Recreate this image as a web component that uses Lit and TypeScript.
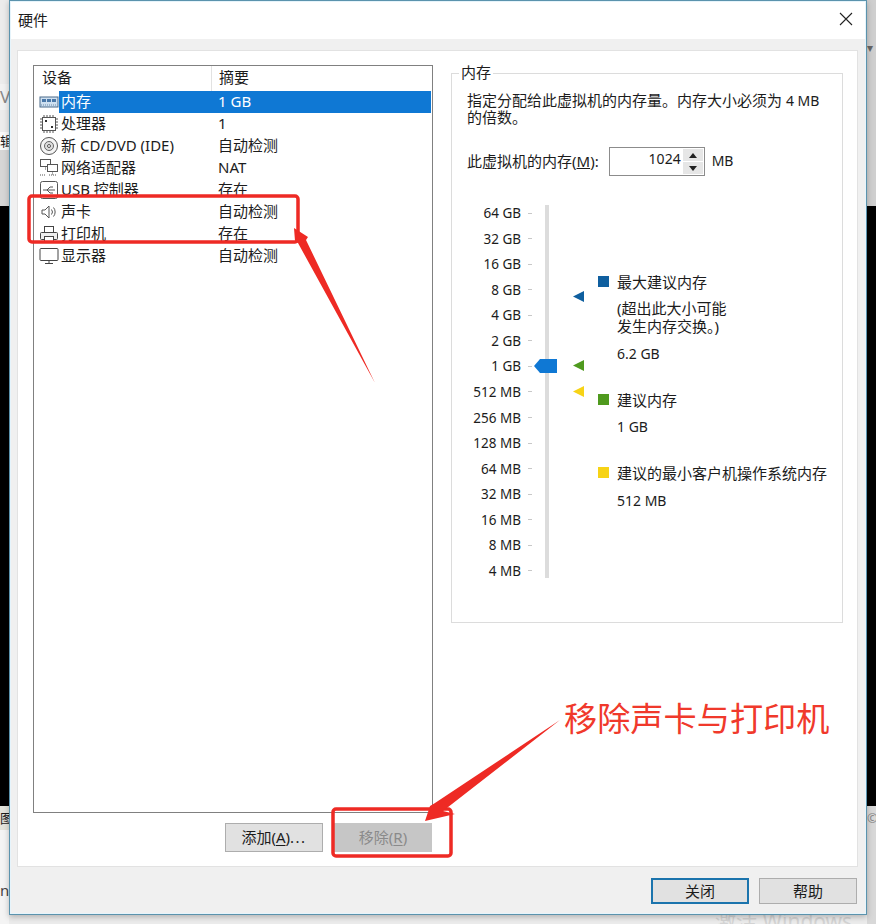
import { LitElement, html, css, svg } from "lit";
import { customElement } from "lit/decorators.js";

const icons: Record<string, unknown> = {
  mem: svg`<rect x="1" y="5" width="18" height="10" fill="#cfe0f0" stroke="#4a6a8a"/><rect x="3" y="7" width="4" height="3" fill="#4a78a8"/><rect x="8" y="7" width="4" height="3" fill="#4a78a8"/><rect x="13" y="7" width="4" height="3" fill="#4a78a8"/><path d="M2 13h16" stroke="#6a8aa8" stroke-dasharray="1 1"/>`,
  cpu: svg`<rect x="3.500" y="3.500" width="13" height="13" fill="#fff" stroke="#555"/><path d="M1 5h2M1 8h2M1 11h2M1 14h2M17 5h2M17 8h2M17 11h2M17 14h2M5 1v2M8 1v2M11 1v2M14 1v2M5 17v2M8 17v2M11 17v2M14 17v2" stroke="#555"/><rect x="6" y="6" width="2" height="2" fill="#333"/><rect x="12" y="12" width="2" height="2" fill="#333"/>`,
  cd: svg`<circle cx="10" cy="10" r="8.500" fill="#f4f4f4" stroke="#555"/><circle cx="10" cy="10" r="4.500" fill="#ddd" stroke="#666"/><circle cx="10" cy="10" r="1.500" fill="#fff" stroke="#555"/>`,
  net: svg`<rect x="1.500" y="1.500" width="10" height="7" fill="#fff" stroke="#555"/><rect x="8.500" y="6.500" width="10" height="7" fill="#fff" stroke="#555"/><path d="M13.500 13.500v3M10 17h7M6.500 8.500v4M1 17h6" stroke="#555" stroke-dasharray="1 1"/>`,
  usb: svg`<rect x="1.500" y="1.500" width="17" height="17" rx="2" fill="#fff" stroke="#555"/><path d="M4 10h12M8 10l3-3h3M8 10l3 3h3" fill="none" stroke="#555"/>`,
  sound: svg`<path d="M3 8h3l4-4v12l-4-4H3z" fill="#fff" stroke="#555"/><path d="M12.500 7.500a4 4 0 0 1 0 5M14.500 5.500a7 7 0 0 1 0 9" fill="none" stroke="#555"/>`,
  printer: svg`<rect x="5.500" y="2.500" width="9" height="6" fill="#fff" stroke="#444"/><rect x="1.500" y="8.500" width="17" height="7" rx="1" fill="#eee" stroke="#444"/><rect x="5.500" y="12.500" width="9" height="5" fill="#fff" stroke="#444"/>`,
  display: svg`<rect x="1" y="2.500" width="18" height="12" rx="1" fill="#fff" stroke="#444"/><path d="M6 17.500h8M10 14.500v3" stroke="#444"/>`,
};

const devices = [
  ["mem", "内存", "1 GB"],
  ["cpu", "处理器", "1"],
  ["cd", "新 CD/DVD (IDE)", "自动检测"],
  ["net", "网络适配器", "NAT"],
  ["usb", "USB 控制器", "存在"],
  ["sound", "声卡", "自动检测"],
  ["printer", "打印机", "存在"],
  ["display", "显示器", "自动检测"],
];

const scale = ["64 GB", "32 GB", "16 GB", "8 GB", "4 GB", "2 GB", "1 GB", "512 MB", "256 MB", "128 MB", "64 MB", "32 MB", "16 MB", "8 MB", "4 MB"];

@customElement("app-root")
export class AppRoot extends LitElement {
  static styles = css`
    :host {
      display: block;
      position: relative;
      width: 876px;
      height: 924px;
      overflow: hidden;
      background: #ececec;
      font-family: "Noto Sans", "Noto Sans CJK SC", sans-serif;
      font-size: 15px;
      color: #1c1c1c;
    }
    .lat { font-size: 14px; }
    .behind { position: absolute; overflow: hidden; }
    .black-l { left: 0; top: 206px; width: 9px; height: 600px; background: #000; }
    .black-r { left: 867px; top: 206px; width: 9px; height: 600px; background: #000; }
    .tab-l { left: 0; top: 150px; width: 9px; height: 56px; background: #d6d6d6; }
    .tab-r { left: 867px; top: 0; width: 9px; height: 206px; background: #cfcfcf; color: #666; font-size: 12px; line-height: 16px; padding-top: 40px; box-sizing: border-box; }
    .v { left: 0; top: 84px; width: 9px; height: 26px; background: #f2f2f2; color: #888; font-size: 17px; line-height: 26px; }
    .edit { left: 0; top: 132px; width: 9px; height: 18px; background: #fafafa; line-height: 18px; font-size: 13px; }
    .pic { left: 0; top: 806px; width: 9px; height: 24px; background: #e4e4dc; line-height: 24px; font-size: 13px; }
    .n { left: 0; top: 830px; width: 9px; height: 94px; background: #f4f4f4; padding-top: 50px; box-sizing: border-box; font-size: 15px; color: #444; }
    .foot-r { left: 867px; top: 806px; width: 9px; height: 118px; background: #d8d8d8; color: #888; font-size: 13px; line-height: 24px; }
    .mark { left: 715px; top: 908px; width: 150px; height: 16px; font-size: 21px; line-height: 26px; color: #d4d4d4; white-space: nowrap; }

    .dialog {
      position: relative;
      box-sizing: border-box;
      margin-left: 9px;
      width: 858px;
      height: 915px;
      display: flex;
      flex-direction: column;
      background: #f0f0f0;
      border: 1px solid #5b93ad;
      box-shadow: 0 2px 6px rgba(0,0,0,.25), inset 0 0 0 1px #e6f4fb;
    }
    .title {
      box-sizing: border-box;
      height: 37px;
      flex: none;
      background: #fff;
      display: flex;
      align-items: center;
      justify-content: space-between;
      padding: 0 12px 3px 7px;
      margin: 1px 1px 0;
    }
    .title svg { display: block; }
    .panel {
      flex: none;
      box-sizing: border-box;
      margin: 11px 8px 0 7px;
      width: 841px;
      height: 817px;
      background: #fff;
      border: 1px solid #e2e2e2;
      padding: 14px 14px 0 15px;
      display: grid;
      grid-template-columns: 400px 392px;
      column-gap: 18px;
      align-items: start;
    }
    .left { display: flex; flex-direction: column; }
    .list {
      box-sizing: border-box;
      height: 748px;
      border: 1px solid #808080;
      background: #fff;
    }
    .head, .row {
      display: grid;
      grid-template-columns: 178px 1fr;
    }
    .head { height: 25px; line-height: 23px; }
    .head span:first-child { padding-left: 8px; border-right: 1px solid #e2e2e2; }
    .head span:last-child { padding-left: 7px; }
    .row { height: 22px; line-height: 20px; }
    .name { display: flex; gap: 0; padding-left: 5px; white-space: nowrap; }
    .name svg { flex: none; display: block; margin-top: 1px; }
    .name span { flex: 1; padding: 0 0 2px 2px; }
    .sum { padding: 0 0 2px 6px; }
    .row.sel .name span { background: #0f78d4; color: #fff; }
    .row.sel .sum { background: #0f78d4; color: #fff; margin-right: 1px; }
    .actions { display: flex; justify-content: flex-end; gap: 11px; margin-top: 10px; padding-right: 1px; }
    .btn {
      box-sizing: border-box;
      width: 98px;
      height: 29px;
      background: #e1e1e1;
      border: 1px solid #adadad;
      display: flex;
      align-items: center;
      justify-content: center;
      padding-bottom: 2px;
      white-space: pre;
    }
    .btn u { text-underline-offset: 2px; }
    .dots { letter-spacing: 1.500px; }
    .btn.off { background: #c6c6c6; border-color: #c6c6c6; color: #8a8a8a; }

    .group {
      position: relative;
      box-sizing: border-box;
      margin-top: 8px;
      height: 550px;
      border: 1px solid #dcdcdc;
      padding: 18px 15px 0;
    }
    .legend { position: absolute; left: 7px; top: -10px; padding: 0 2px; background: #fff; line-height: 17px; }
    .desc { line-height: 17px; }
    .mem-row { display: flex; align-items: center; margin-top: 21px; height: 29px; }
    .mem-row > span { padding-bottom: 2px; }
    .spin {
      box-sizing: border-box;
      width: 96px;
      height: 29px;
      margin-left: 10px;
      margin-right: 7px;
      border: 1px solid #8c8c8c;
      display: flex;
      padding: 1px 1px 1px 0;
    }
    .spin-val { flex: 1; text-align: right; padding-right: 2px; line-height: 20px; font-size: 14px; }
    .spin-btns { width: 20px; display: flex; flex-direction: column; gap: 1px; }
    .spin-btns div { flex: 1; background: #e6e6e6; display: flex; align-items: center; justify-content: center; }
    .slider { position: relative; margin-top: 29px; height: 374px; display: flex; }
    .scale { width: 65px; height: 374px; display: flex; flex-direction: column; justify-content: space-between; flex: none; font-size: 13.500px; }
    .tick { display: flex; align-items: center; justify-content: flex-end; line-height: 16px; height: 16px; white-space: nowrap; }
    .tick i { width: 4px; height: 1px; background: #c8c8c8; margin-left: 7px; }
    .track { width: 4px; height: 373px; background: #dcdcdc; margin-left: 13px; flex: none; }
    .thumb { position: absolute; left: 67px; top: 154px; }
    .ptr { position: absolute; left: 106px; }
    .ptr.a { top: 86px; }
    .ptr.b { top: 155px; }
    .ptr.c { top: 181px; }
    .info { margin-left: 49px; padding-top: 69px; line-height: 16px; flex: none; white-space: nowrap; }
    .ititle { position: relative; padding-left: 19px; }
    .ititle b { position: absolute; left: 0; top: 2px; width: 11px; height: 11px; }
    .blue { background: #0f5f9f; }
    .green { background: #4f9a1e; }
    .yellow { background: #f7d316; }
    .note { margin: 10px 0 0 19px; line-height: 17.500px; }
    .val { margin: 11px 0 0 19px; font-size: 14px; }
    .val:last-child { margin-top: 12px; }
    .spaced { margin-top: 30px; }

    .footer { flex: 1; display: flex; justify-content: flex-end; gap: 10px; padding: 11px 9px 0 0; }
    .footer .btn { height: 26px; }
    .footer .btn.def { border: 2px solid #1b74ad; }

    .notes { position: absolute; left: 0; top: 0; width: 876px; height: 924px; pointer-events: none; }
    .callout {
      position: absolute;
      left: 564px;
      top: 697px;
      font-size: 33.200px;
      line-height: 44px;
      color: #f0392b;
      white-space: nowrap;
    }
  `;

  render() {
    return html`
      <div class="behind black-l"></div>
      <div class="behind black-r"></div>
      <div class="behind tab-l"></div>
      <div class="behind tab-r">▾</div>
      <div class="behind v">V</div>
      <div class="behind edit">辑</div>
      <div class="behind pic">图</div>
      <div class="behind n">n</div>
      <div class="behind foot-r">©</div>
      <div class="behind mark">激活 Windows</div>

      <div class="dialog">
        <div class="title">
          <span>硬件</span>
          <svg width="14" height="14" viewBox="0 0 14 14"><path d="M1 1l12 12M13 1L1 13" stroke="#222" stroke-width="1.100"/></svg>
        </div>
        <div class="panel">
          <div class="left">
            <div class="list">
              <div class="head"><span>设备</span><span>摘要</span></div>
              ${devices.map(
                ([icon, name, sum], i) => html`
                  <div class="row ${i === 0 ? "sel" : ""}">
                    <div class="name">
                      <svg width="20" height="20" viewBox="0 0 20 20">${icons[icon]}</svg>
                      <span>${name}</span>
                    </div>
                    <div class="sum">${sum}</div>
                  </div>
                `
              )}
            </div>
            <div class="actions">
              <div class="btn">添加(<u>A</u>)<span class="dots">...</span></div>
              <div class="btn off">移除(<u>R</u>)</div>
            </div>
          </div>
          <div class="group">
            <span class="legend">内存</span>
            <div class="desc">指定分配给此虚拟机的内存量。内存大小必须为 <span class="lat">4 MB</span><br />的倍数。</div>
            <div class="mem-row">
              <span>此虚拟机的内存(<u>M</u>):</span>
              <div class="spin">
                <div class="spin-val">1024</div>
                <div class="spin-btns">
                  <div><svg width="8" height="5" viewBox="0 0 8 5"><path d="M4 0l4 5H0z" fill="#222"/></svg></div>
                  <div><svg width="8" height="5" viewBox="0 0 8 5"><path d="M0 0h8L4 5z" fill="#222"/></svg></div>
                </div>
              </div>
              <span class="lat">MB</span>
            </div>
            <div class="slider">
              <div class="scale">
                ${scale.map((s) => html`<div class="tick"><span>${s}</span><i></i></div>`)}
              </div>
              <div class="track"></div>
              <svg class="thumb" width="23" height="14" viewBox="0 0 23 14"><path d="M0 7l6-7h17v14H6z" fill="#0f78d4"/></svg>
              <svg class="ptr a" width="11" height="11" viewBox="0 0 11 11"><path d="M0 5.500L11 0v11z" fill="#0f5f9f"/></svg>
              <svg class="ptr b" width="11" height="11" viewBox="0 0 11 11"><path d="M0 5.500L11 0v11z" fill="#4f9a1e"/></svg>
              <svg class="ptr c" width="11" height="11" viewBox="0 0 11 11"><path d="M0 5.500L11 0v11z" fill="#f7d316"/></svg>
              <div class="info">
                <div class="ititle"><b class="blue"></b>最大建议内存</div>
                <div class="note">(超出此大小可能<br />发生内存交换。)</div>
                <div class="val">6.2 GB</div>
                <div class="ititle spaced"><b class="green"></b>建议内存</div>
                <div class="val">1 GB</div>
                <div class="ititle spaced"><b class="yellow"></b>建议的最小客户机操作系统内存</div>
                <div class="val">512 MB</div>
              </div>
            </div>
          </div>
        </div>
        <div class="footer">
          <div class="btn def">关闭</div>
          <div class="btn">帮助</div>
        </div>
      </div>

      <svg class="notes" viewBox="0 0 876 924">
        <rect x="29" y="196" width="269" height="46" rx="3" fill="none" stroke="#ee2a24" stroke-width="3.500"/>
        <rect x="333" y="809" width="118" height="47" rx="3" fill="none" stroke="#ee2a24" stroke-width="3.500"/>
        <path d="M375 383L306 240L308 237L294 228L295 241L298 243z" fill="#ee2a24"/>
        <path d="M560 720L435 803L430 806L425 821L455 814L443 811z" fill="#ee2a24"/>
      </svg>
      <div class="callout">移除声卡与打印机</div>
    `;
  }
}
